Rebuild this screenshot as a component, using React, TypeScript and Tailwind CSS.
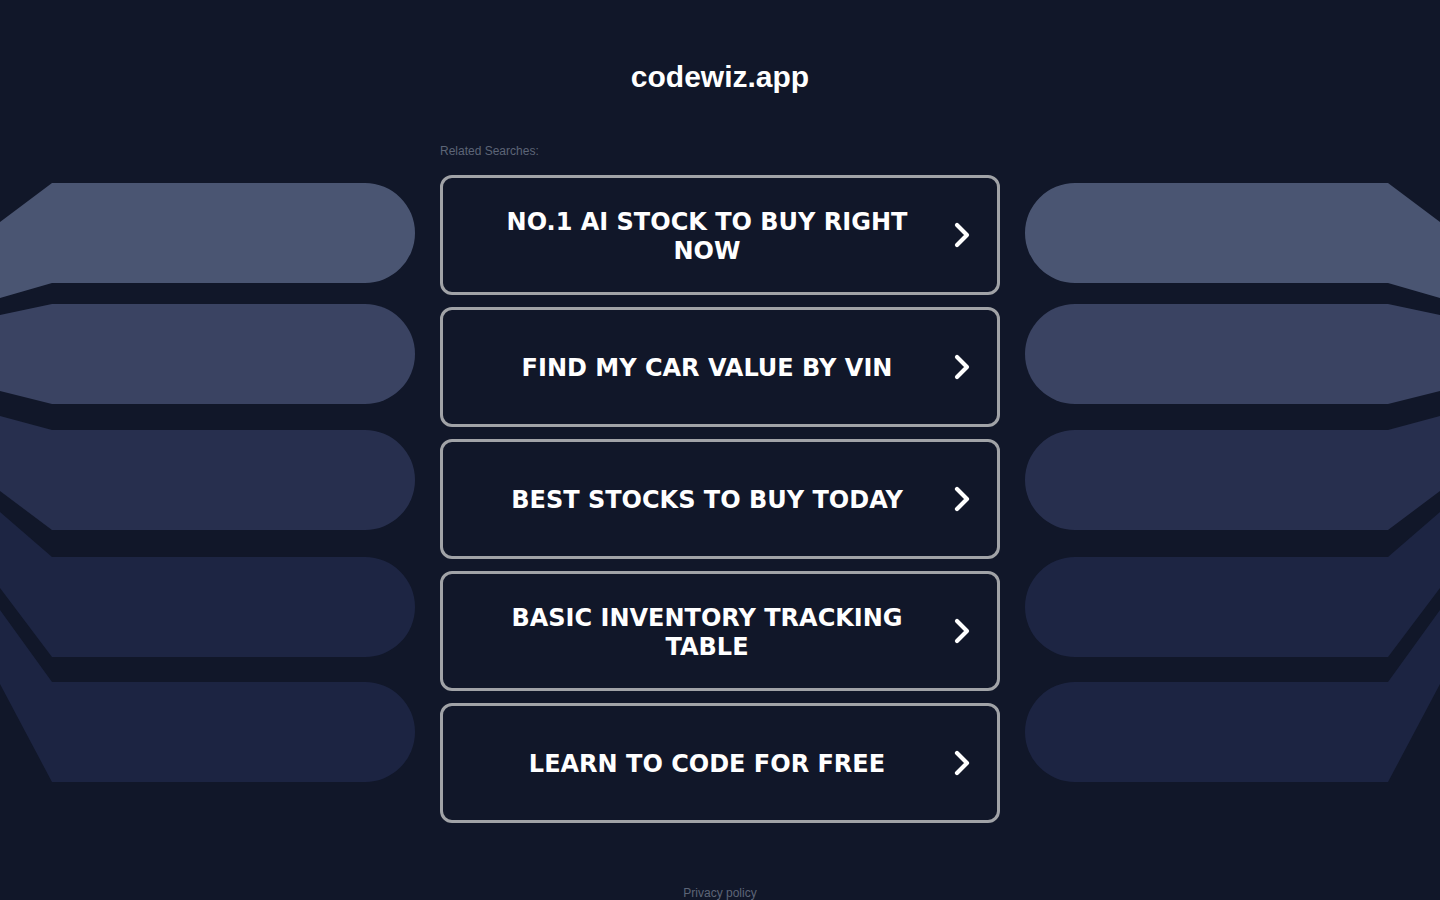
import React from "react";

const cards = [
  "NO.1 AI STOCK TO BUY RIGHT NOW",
  "FIND MY CAR VALUE BY VIN",
  "BEST STOCKS TO BUY TODAY",
  "BASIC INVENTORY TRACKING TABLE",
  "LEARN TO CODE FOR FREE",
];

function Deco({ flip }: { flip?: boolean }) {
  return (
    <svg
      width="440"
      height="630"
      viewBox="0 170 440 630"
      className={flip ? "block -scale-x-100" : "block"}
    >
      <path d="M0,222 L52,183 L365,183 A50,50 0 0 1 365,283 L52,283 L0,298 Z" fill="#4a5572" />
      <path d="M0,315 L52,304 L365,304 A50,50 0 0 1 365,404 L52,404 L0,391 Z" fill="#3a4362" />
      <path d="M0,416 L52,430 L365,430 A50,50 0 0 1 365,530 L52,530 L0,491 Z" fill="#272f4e" />
      <path d="M0,512 L52,557 L365,557 A50,50 0 0 1 365,657 L52,657 L0,588 Z" fill="#1d2543" />
      <path d="M0,610 L52,682 L365,682 A50,50 0 0 1 365,782 L52,782 L0,684 Z" fill="#1c2442" />
    </svg>
  );
}

function Chevron() {
  return (
    <svg width="16" height="26" viewBox="0 0 16 26" className="shrink-0">
      <path d="M3 3 L13 13 L3 23" fill="none" stroke="#ffffff" strokeWidth="4.2" strokeLinecap="round" strokeLinejoin="round" />
    </svg>
  );
}

export default function App() {
  return (
    <div className="min-h-screen w-full bg-[#111729] overflow-hidden">
      <div className="grid grid-cols-[440px_560px_440px]">
        <div className="pt-[170px]">
          <Deco />
        </div>
        <div className="flex flex-col">
          <h1
            className="pt-[59px] h-[95px] text-center text-[30px] leading-[36px] font-bold text-white"
            style={{ fontFamily: '"Liberation Sans", Arial, sans-serif' }}
          >
            codewiz.app
          </h1>
          <div
            className="mt-[49px] text-[12px] leading-[14px] text-[#5d6577]"
            style={{ fontFamily: '"Liberation Sans", Arial, sans-serif' }}
          >
            Related Searches:
          </div>
          <div className="mt-[17px] flex flex-col gap-[12px]">
            {cards.map((c) => (
              <div
                key={c}
                className="h-[120px] rounded-[12px] border-[3px] border-[#a1a3a7] flex items-center pl-[17px] pr-[27px]"
              >
                <div
                  className="flex-1 text-center text-white font-bold text-[24px] leading-[29px] tracking-[0px] px-[40px] pt-[3px]"
                  style={{ fontFamily: '"DejaVu Sans", Verdana, sans-serif' }}
                >
                  {c}
                </div>
                <Chevron />
              </div>
            ))}
          </div>
          <div
            className="mt-[63px] pb-[10px] text-center text-[12px] leading-[14px] text-[#5d6577]"
            style={{ fontFamily: '"Liberation Sans", Arial, sans-serif' }}
          >
            Privacy policy
          </div>
        </div>
        <div className="pt-[170px]">
          <Deco flip />
        </div>
      </div>
    </div>
  );
}
